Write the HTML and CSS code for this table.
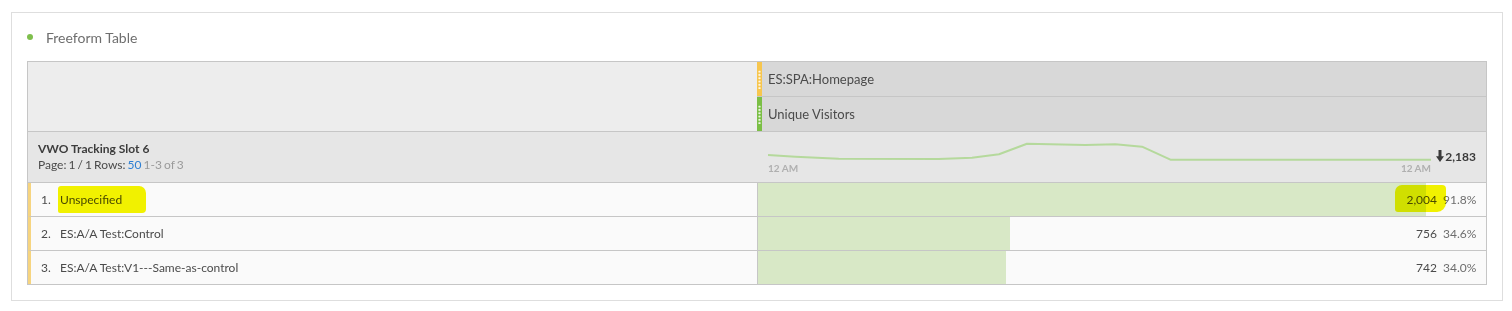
FILE: index.html
```html
<!DOCTYPE html>
<html lang="en">
<head>
<meta charset="utf-8">
<title>Freeform Table</title>
<link rel="stylesheet" href="styles.css">
</head>
<body>
<section class="card">
  <header class="card-title"><span class="dot"></span><span>Freeform Table</span></header>
  <div class="ft">
    <div class="hd-left"></div>
    <div class="hd-cell hd-first"><span class="grip grip-y"></span><span class="hd-label">ES:SPA:Homepage</span></div>
    <div class="hd-cell"><span class="grip grip-g"></span><span class="hd-label">Unique Visitors</span></div>

    <div class="sum-left">
      <div class="dim-name">VWO Tracking Slot 6</div>
      <div class="pager">Page: 1 / 1 Rows: <span class="rows-link">50</span> <span class="muted">1-3 of 3</span></div>
    </div>
    <div class="sum-right">
      <div class="chart">
        <svg class="spark" width="663" height="22" viewBox="0 0 663 22" aria-hidden="true">
          <polyline fill="none" stroke="#b5d99c" stroke-width="2" stroke-linejoin="round" points="0,15 27.4,16.7 70.7,18.7 170.7,19 204,17.7 231,14.3 259,3.7 317.4,5 347.4,4.3 374,6.7 402.4,19.7 663,19.7"/>
        </svg>
        <div class="axis"><span>12 AM</span><span>12 AM</span></div>
      </div>
      <div class="total">
        <svg class="arrow" width="8" height="12" viewBox="0 0 8 12" aria-hidden="true"><path d="M2.5 0h3v6.2H8L4 12 0 6.2h2.5z" fill="#3a3a3a"/></svg>
        <span>2,183</span>
      </div>
    </div>

    <div class="row-left"><span class="num">1.</span><span class="hl hl-name">Unspecified</span></div>
    <div class="row-right">
      <div class="bar" style="width:91.8%"></div>
      <div class="vals"><span class="val hl hl-val">2,004</span><span class="pct">91.8%</span></div>
    </div>

    <div class="row-left"><span class="num">2.</span><span>ES:A/A Test:Control</span></div>
    <div class="row-right">
      <div class="bar" style="width:34.6%"></div>
      <div class="vals"><span class="val">756</span><span class="pct">34.6%</span></div>
    </div>

    <div class="row-left row-last"><span class="num">3.</span><span>ES:A/A Test:V1---Same-as-control</span></div>
    <div class="row-right row-last">
      <div class="bar" style="width:34.0%"></div>
      <div class="vals"><span class="val">742</span><span class="pct">34.0%</span></div>
    </div>
  </div>
</section>
</body>
</html>
```

FILE: styles.css
```css
* { box-sizing: border-box; }

html, body {
  margin: 0;
  padding: 0;
  background: #ffffff;
}

body {
  font-family: Lato, "Open Sans", "Liberation Sans", sans-serif;
  color: #4b4b4b;
  padding: 12px 10px 0 11px;
}

.card {
  width: 1492px;
  height: 289px;
  border: 1px solid #dedede;
  background: #fff;
  padding: 15px 15px 15px 15px;
}

.card-title {
  display: flex;
  align-items: center;
  height: 18px;
  font-size: 14px;
  color: #6e6e6e;
  margin-bottom: 15px;
}

.dot {
  width: 6px;
  height: 6px;
  border-radius: 50%;
  background: #7fbf4d;
  margin-left: 0;
  margin-right: 13px;
}

.ft {
  display: grid;
  grid-template-columns: 729px 729px;
  grid-template-rows: 35px 35px 51px 34px 34px 33px;
  border: 1px solid #c6c6c6;
  font-size: 12px;
}

.hd-left {
  grid-row: 1 / 3;
  background: #ededed;
  border-bottom: 1px solid #c6c6c6;
}

.hd-cell {
  display: flex;
  align-items: center;
  background: #d8d8d8;
  border-bottom: 1px solid #c6c6c6;
  font-size: 13px;
  color: #4b4b4b;
}

.grip {
  align-self: stretch;
  width: 5px;
  display: flex;
  align-items: center;
  justify-content: center;
  flex: none;
}

.grip::after {
  content: "";
  width: 5px;
  height: 19px;
  background: radial-gradient(circle, rgba(255,255,255,0.85) 0.9px, transparent 1.3px) center top / 5px 3.3px repeat-y;
}

.grip-y { background: #f7c64e; }
.grip-g { background: #7bbf45; }

.hd-label { padding-left: 6px; }

.sum-left {
  background: #e6e6e6;
  border-bottom: 1px solid #c6c6c6;
  padding: 9px 0 0 10px;
  line-height: 16px;
}

.dim-name {
  font-weight: 700;
  color: #3c3c3c;
}

.pager { color: #4b4b4b; word-spacing: -1px; }
.rows-link { color: #2d7fd3; }
.muted { color: #9b9b9b; }

.sum-right {
  background: #e6e6e6;
  border-bottom: 1px solid #c6c6c6;
  display: flex;
  align-items: center;
  padding: 0 10px 0 11px;
}

.chart {
  width: 663px;
  display: flex;
  flex-direction: column;
}

.spark { display: block; }

.axis {
  display: flex;
  justify-content: space-between;
  font-size: 10px;
  font-weight: 700;
  line-height: 12px;
  color: #b0b0b0;
  height: 12px;
}

.total {
  margin-left: auto;
  display: flex;
  align-items: center;
  gap: 1px;
  font-weight: 700;
  font-size: 12px;
  color: #3a3a3a;
  padding-bottom: 2px;
}

.arrow { display: block; }

.row-left {
  display: flex;
  align-items: center;
  background: #fafafa;
  border-left: 3px solid #f6d47f;
  border-bottom: 1px solid #c6c6c6;
  padding-left: 10px;
}

.row-right {
  position: relative;
  display: flex;
  align-items: center;
  background: #fafafa;
  border-left: 1px solid #c6c6c6;
  border-bottom: 1px solid #c6c6c6;
}

.row-last { border-bottom: none; }

.num {
  width: 19px;
  flex: none;
}

.bar {
  align-self: stretch;
  background: #d8e8c6;
  flex: none;
}

.vals {
  position: absolute;
  right: 10px;
  top: 0;
  bottom: 0;
  display: flex;
  align-items: center;
  gap: 6px;
}

.pct { color: #6e6e6e; width: 33px; text-align: right; }

.hl { position: relative; }

.hl::before {
  content: "";
  position: absolute;
  background: #f6f600;
  mix-blend-mode: multiply;
}

.hl-name::before {
  left: -2px;
  right: -24px;
  top: -6px;
  bottom: -6px;
  border-radius: 3px 7px 4px 2px;
}

.hl-val::before {
  left: -11px;
  right: -9px;
  top: -7px;
  bottom: -5px;
  border-radius: 7px 4px 9px 3px;
}
```
